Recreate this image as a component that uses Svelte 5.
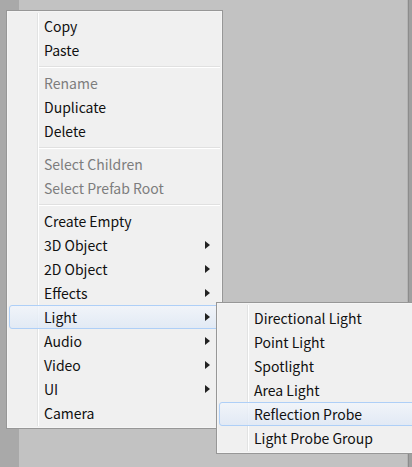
<script>
  const groups = [
    [{ label: 'Copy' }, { label: 'Paste' }],
    [{ label: 'Rename', disabled: true }, { label: 'Duplicate' }, { label: 'Delete' }],
    [{ label: 'Select Children', disabled: true }, { label: 'Select Prefab Root', disabled: true }],
    [
      { label: 'Create Empty' },
      { label: '3D Object', more: true },
      { label: '2D Object', more: true },
      { label: 'Effects', more: true },
      {
        label: 'Light',
        more: true,
        active: true,
        children: [
          { label: 'Directional Light' },
          { label: 'Point Light' },
          { label: 'Spotlight' },
          { label: 'Area Light' },
          { label: 'Reflection Probe', active: true },
          { label: 'Light Probe Group' }
        ]
      },
      { label: 'Audio', more: true },
      { label: 'Video', more: true },
      { label: 'UI', more: true },
      { label: 'Camera' }
    ]
  ];
</script>

{#snippet entry(item)}
  <li role="none">
    <button
      type="button"
      role="menuitem"
      class:active={item.active}
      disabled={item.disabled}
      aria-haspopup={item.more ? 'menu' : undefined}
    >
      <span>{item.label}</span>
      {#if item.more}
        <svg width="5" height="8" viewBox="0 0 5 8" aria-hidden="true"><path d="M0 0L5 4L0 8Z" /></svg>
      {/if}
    </button>
    {#if item.children}
      <ul class="menu submenu" role="menu" aria-label={item.label}>
        {#each item.children as child}
          {@render entry(child)}
        {/each}
      </ul>
    {/if}
  </li>
{/snippet}

<main>
  <ul class="menu" role="menu">
    {#each groups as group, i}
      {#if i > 0}<li class="separator" role="separator"></li>{/if}
      {#each group as item}
        {@render entry(item)}
      {/each}
    {/each}
  </ul>
</main>

<style>
  :global(body) {
    overflow: hidden;
  }
  main {
    box-sizing: border-box;
    min-height: 100vh;
    padding: 10px 6px;
    background:
      linear-gradient(to right, #b4b4b4 1px, #8c8c8c 1px, #8c8c8c 2px, #a0a0a0 2px) right / 5px 100% no-repeat,
      linear-gradient(to right, #a9a9a9 19px, #c2c2c2 19px);
  }
  .menu {
    box-sizing: border-box;
    width: 217px;
    margin: 0;
    padding: 3px 2px;
    list-style: none;
    border: 1px solid #979797;
    box-shadow: inset 0 0 0 1px #f5f5f5;
    background:
      linear-gradient(to right, #e2e3e3 1px, #fff 1px) 30px 2px / 2px calc(100% - 4px) no-repeat,
      #f0f0f0;
  }
  li {
    position: relative;
  }
  button {
    box-sizing: border-box;
    display: flex;
    align-items: center;
    justify-content: space-between;
    width: 100%;
    height: 24px;
    margin: 0;
    padding: 0 9px 0 34px;
    border: 1px solid transparent;
    border-radius: 3px;
    background: none;
    color: #111;
    font: 14px/20px "Noto Sans CJK SC", "Noto Sans", sans-serif;
    text-align: left;
    white-space: nowrap;
  }
  button:disabled {
    color: #7d7d7d;
  }
  button.active {
    border-color: #aecff7;
    background: linear-gradient(rgba(241, 245, 251, 0.8), rgba(222, 232, 246, 0.8));
  }
  svg {
    fill: #222;
  }
  .separator {
    height: 9px;
    margin-left: 30px;
    background: linear-gradient(#e0e0e0 1px, #fff 1px) 0 4px / 100% 2px no-repeat;
  }
  .submenu {
    position: absolute;
    top: -3px;
    left: calc(100% - 4px);
    z-index: 1;
  }
</style>
